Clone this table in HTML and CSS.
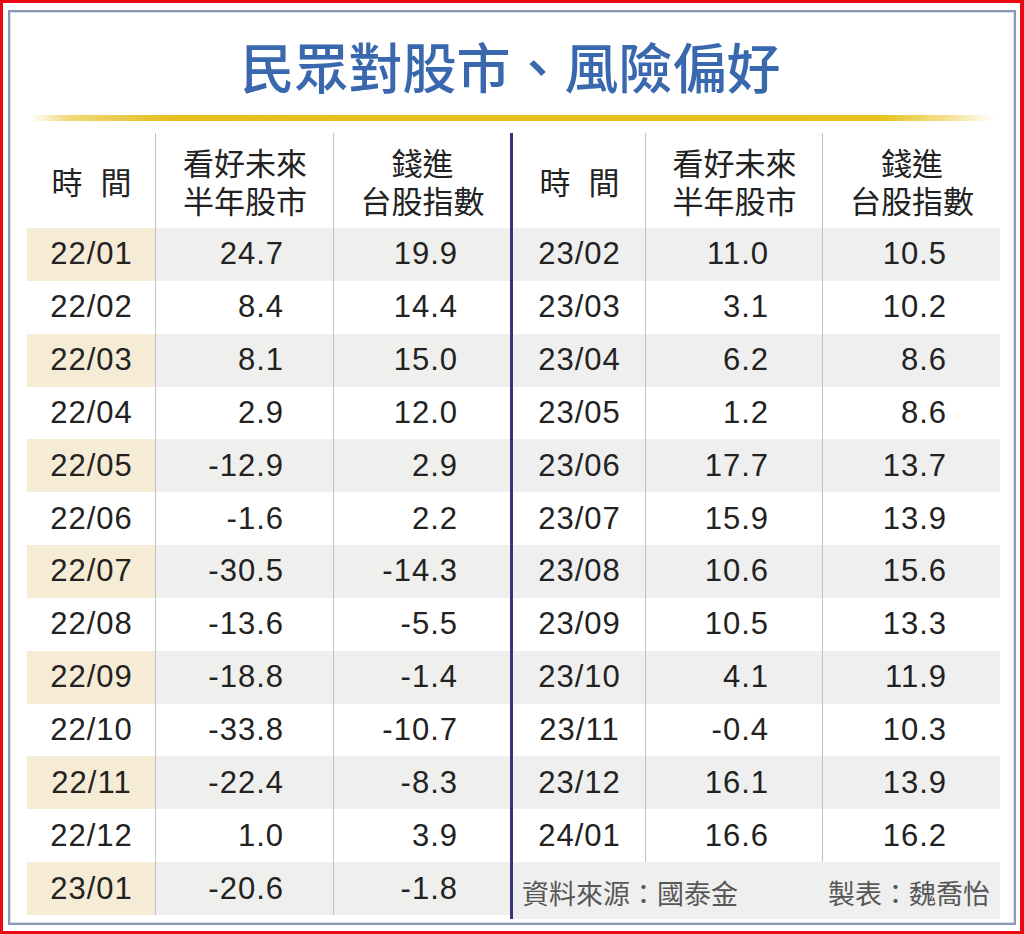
FILE: index.html
```html
<!DOCTYPE html>
<html lang="zh-Hant">
<head>
<meta charset="utf-8">
<title>民眾對股市、風險偏好</title>
<link rel="stylesheet" href="styles.css">
</head>
<body>
<div class="page">
  <div class="frame">
    <h1 class="title">民眾對股市、風險偏好</h1>
    <div class="rule"></div>
    <div class="tables">
      <div class="tbl tbl-left">
        <div class="row head">
          <div class="c c1"><span class="spaced">時間</span></div>
          <div class="c c2"><span class="hl">看好未來</span><span class="hl">半年股市</span></div>
          <div class="c c3"><span class="hl">錢進</span><span class="hl">台股指數</span></div>
        </div>
        <div class="row odd"><div class="c c1">22/01</div><div class="c c2 num">24.7</div><div class="c c3 num">19.9</div></div>
        <div class="row"><div class="c c1">22/02</div><div class="c c2 num">8.4</div><div class="c c3 num">14.4</div></div>
        <div class="row odd"><div class="c c1">22/03</div><div class="c c2 num">8.1</div><div class="c c3 num">15.0</div></div>
        <div class="row"><div class="c c1">22/04</div><div class="c c2 num">2.9</div><div class="c c3 num">12.0</div></div>
        <div class="row odd"><div class="c c1">22/05</div><div class="c c2 num">-12.9</div><div class="c c3 num">2.9</div></div>
        <div class="row"><div class="c c1">22/06</div><div class="c c2 num">-1.6</div><div class="c c3 num">2.2</div></div>
        <div class="row odd"><div class="c c1">22/07</div><div class="c c2 num">-30.5</div><div class="c c3 num">-14.3</div></div>
        <div class="row"><div class="c c1">22/08</div><div class="c c2 num">-13.6</div><div class="c c3 num">-5.5</div></div>
        <div class="row odd"><div class="c c1">22/09</div><div class="c c2 num">-18.8</div><div class="c c3 num">-1.4</div></div>
        <div class="row"><div class="c c1">22/10</div><div class="c c2 num">-33.8</div><div class="c c3 num">-10.7</div></div>
        <div class="row odd"><div class="c c1">22/11</div><div class="c c2 num">-22.4</div><div class="c c3 num">-8.3</div></div>
        <div class="row"><div class="c c1">22/12</div><div class="c c2 num">1.0</div><div class="c c3 num">3.9</div></div>
        <div class="row odd"><div class="c c1">23/01</div><div class="c c2 num">-20.6</div><div class="c c3 num">-1.8</div></div>
      </div>
      <div class="vbar"></div>
      <div class="tbl tbl-right">
        <div class="row head">
          <div class="c c1"><span class="spaced">時間</span></div>
          <div class="c c2"><span class="hl">看好未來</span><span class="hl">半年股市</span></div>
          <div class="c c3"><span class="hl">錢進</span><span class="hl">台股指數</span></div>
        </div>
        <div class="row odd"><div class="c c1">23/02</div><div class="c c2 num">11.0</div><div class="c c3 num">10.5</div></div>
        <div class="row"><div class="c c1">23/03</div><div class="c c2 num">3.1</div><div class="c c3 num">10.2</div></div>
        <div class="row odd"><div class="c c1">23/04</div><div class="c c2 num">6.2</div><div class="c c3 num">8.6</div></div>
        <div class="row"><div class="c c1">23/05</div><div class="c c2 num">1.2</div><div class="c c3 num">8.6</div></div>
        <div class="row odd"><div class="c c1">23/06</div><div class="c c2 num">17.7</div><div class="c c3 num">13.7</div></div>
        <div class="row"><div class="c c1">23/07</div><div class="c c2 num">15.9</div><div class="c c3 num">13.9</div></div>
        <div class="row odd"><div class="c c1">23/08</div><div class="c c2 num">10.6</div><div class="c c3 num">15.6</div></div>
        <div class="row"><div class="c c1">23/09</div><div class="c c2 num">10.5</div><div class="c c3 num">13.3</div></div>
        <div class="row odd"><div class="c c1">23/10</div><div class="c c2 num">4.1</div><div class="c c3 num">11.9</div></div>
        <div class="row"><div class="c c1">23/11</div><div class="c c2 num">-0.4</div><div class="c c3 num">10.3</div></div>
        <div class="row odd"><div class="c c1">23/12</div><div class="c c2 num">16.1</div><div class="c c3 num">13.9</div></div>
        <div class="row"><div class="c c1">24/01</div><div class="c c2 num">16.6</div><div class="c c3 num">16.2</div></div>
        <div class="row odd foot">
          <span class="src">資料來源：國泰金</span>
          <span class="src">製表：魏喬怡</span>
        </div>
      </div>
    </div>
  </div>
</div>
</body>
</html>
```

FILE: styles.css
```css
html, body {
  margin: 0;
  padding: 0;
  background: #ffffff;
}

.page {
  width: 1024px;
  height: 934px;
  box-sizing: border-box;
  border: 3px solid #ec0a12;
  border-right-width: 4px;
  padding: 7px 4px 6px 5px;
  background: #ffffff;
}

.frame {
  height: 100%;
  box-sizing: border-box;
  border: 2px solid #8a9ab3;
  box-shadow: inset 0 0 0 1px #d7dfeb;
  padding: 0 14px 0 17px;
  display: flex;
  flex-direction: column;
}

.title {
  margin: 27px 0 0;
  height: 54px;
  font-family: "Noto Sans CJK TC", "Noto Sans CJK SC", sans-serif;
  font-size: 54px;
  line-height: 54px;
  font-weight: 500;
  color: #3968ae;
  text-align: center;
  padding-right: 6px;
}

.rule {
  margin: 22px 5px 0 3px;
  height: 6px;
  background: linear-gradient(to right,
    rgba(230, 190, 30, 0) 0%,
    rgba(230, 190, 30, 0.6) 4%,
    #e5bd1d 15%,
    #e8c11e 88%,
    rgba(232, 193, 30, 0.5) 95%,
    rgba(232, 193, 30, 0) 100%);
}

.tables {
  margin-top: 12px;
  display: flex;
  font-family: "Liberation Sans", Arial, sans-serif;
  color: #222222;
}

.vbar {
  width: 3px;
  background: #34347f;
}

.tbl {
  display: flex;
  flex-direction: column;
}

.row {
  display: grid;
  height: 52.85px;
  align-items: stretch;
}

.tbl-left .row {
  grid-template-columns: 128px 178px 177px;
}

.tbl-right .row {
  grid-template-columns: 132px 177px 178px;
}

.row.head {
  height: 95px;
  font-family: "Noto Sans CJK TC", "Noto Sans CJK SC", sans-serif;
  font-size: 31px;
  color: #222222;
}

.c {
  display: flex;
  align-items: center;
  justify-content: center;
  text-align: center;
  font-size: 31px;
  letter-spacing: 1px;
  padding-left: 1px;
}

.row.head .c {
  flex-direction: column;
  letter-spacing: 0;
  font-size: 31px;
}

.hl {
  display: block;
  height: 38px;
  line-height: 38px;
  overflow: visible;
}

.c2, .c3 {
  border-left: 1px solid #c2c2c2;
}

.num {
  justify-content: flex-end;
  text-align: right;
}

.tbl-left .c2.num { padding-right: 49px; }
.tbl-left .c3.num { padding-right: 52px; }
.tbl-right .c2.num { padding-right: 53px; }
.tbl-right .c3.num { padding-right: 53px; }

.spaced {
  letter-spacing: 18px;
  padding-left: 18px;
}

.tbl-left .row.odd .c1 {
  background: #f6ebd5;
}

.tbl-left .row.odd .c2,
.tbl-left .row.odd .c3 {
  background: #efefed;
}

.tbl-right .row.odd {
  background: #efefef;
}

.row.foot {
  display: flex;
  align-items: center;
  justify-content: space-between;
  padding: 4px 10px 0 9px;
  font-family: "Noto Sans CJK TC", "Noto Sans CJK SC", sans-serif;
  font-size: 27px;
  color: #575757;
}
```
